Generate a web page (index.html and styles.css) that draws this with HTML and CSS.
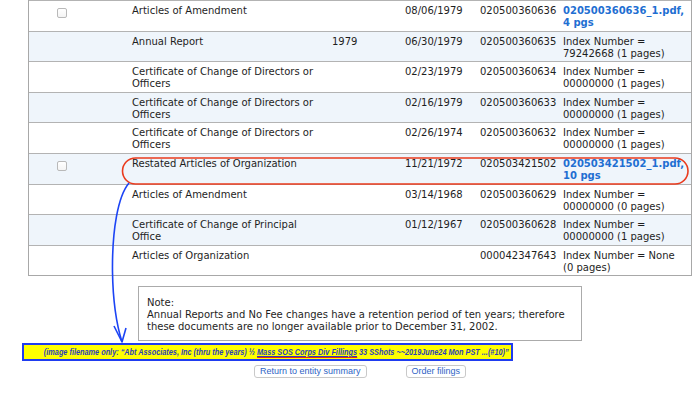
FILE: index.html
```html
<!DOCTYPE html>
<html>
<head>
<meta charset="utf-8">
<link rel="stylesheet" href="styles.css">
</head>
<body>
<div class="page">
  <table class="filings">
    <colgroup>
      <col class="c-check"><col class="c-desc"><col class="c-year"><col class="c-date"><col class="c-num"><col class="c-doc">
    </colgroup>
    <tbody>
      <tr><td><span class="box"></span></td><td>Articles of Amendment</td><td></td><td>08/06/1979</td><td>020500360636</td><td><a class="pdf" href="#">020500360636_1.pdf, 4 pgs</a></td></tr>
      <tr><td></td><td>Annual Report</td><td>1979</td><td>06/30/1979</td><td>020500360635</td><td>Index Number = 79242668 (1 pages)</td></tr>
      <tr><td></td><td>Certificate of Change of Directors or Officers</td><td></td><td>02/23/1979</td><td>020500360634</td><td>Index Number = 00000000 (1 pages)</td></tr>
      <tr><td></td><td>Certificate of Change of Directors or Officers</td><td></td><td>02/16/1979</td><td>020500360633</td><td>Index Number = 00000000 (1 pages)</td></tr>
      <tr><td></td><td>Certificate of Change of Directors or Officers</td><td></td><td>02/26/1974</td><td>020500360632</td><td>Index Number = 00000000 (1 pages)</td></tr>
      <tr><td><span class="box"></span></td><td>Restated Articles of Organization</td><td></td><td>11/21/1972</td><td>020503421502</td><td><a class="pdf" href="#">020503421502_1.pdf, 10 pgs</a></td></tr>
      <tr><td></td><td>Articles of Amendment</td><td></td><td>03/14/1968</td><td>020500360629</td><td>Index Number = 00000000 (0 pages)</td></tr>
      <tr><td></td><td>Certificate of Change of Principal Office</td><td></td><td>01/12/1967</td><td>020500360628</td><td>Index Number = 00000000 (1 pages)</td></tr>
      <tr><td></td><td>Articles of Organization</td><td></td><td></td><td>000042347643</td><td>Index Number = None (0 pages)</td></tr>
    </tbody>
  </table>

  <div class="note">
    Note:<br>
    Annual Reports and No Fee changes have a retention period of ten years; therefore these documents are no longer available prior to December 31, 2002.
  </div>

  <div class="caption"><span class="caption-text">(image filename only: “Abt Associates, Inc (thru the years) ½ <span class="mark">Mass SOS Corps Div Fillings</span> 33 SShots ~~2019June24 Mon PST ...(#10)”</span></div>

  <div class="actions">
    <button class="btn" type="button">Return to entity summary</button>
    <button class="btn" type="button">Order filings</button>
  </div>

  <svg class="annot" width="699" height="395" viewBox="0 0 699 395">
    <rect x="122.5" y="158" width="565.5" height="26" rx="13" ry="13" fill="none" stroke="#ea3b1e" stroke-width="1.6"/>
    <path d="M129,183 C118,196 112,230 112.5,272 C113,305 117,326 122,342" fill="none" stroke="#1c44f5" stroke-width="1.6"/>
    <path d="M114,326 L122,342 L126,328" fill="none" stroke="#1c44f5" stroke-width="1.6" stroke-linejoin="round"/>
  </svg>
</div>
</body>
</html>
```
FILE: styles.css
```css
html, body {
  margin: 0;
  padding: 0;
  background: #ffffff;
}
body {
  font-family: "DejaVu Sans", Verdana, sans-serif;
  font-size: 10px;
  line-height: 12px;
  color: #1e1e1e;
}
.page {
  position: relative;
  width: 699px;
  height: 395px;
  overflow: hidden;
}
.filings {
  margin-left: 28px;
  width: 664px;
  table-layout: fixed;
  border-collapse: separate;
  border-spacing: 0;
  border-left: 1px solid #a8a8a8;
  border-right: 1px solid #a8a8a8;
  border-bottom: 1px solid #a8a8a8;
}
.c-check { width: 100px; }
.c-desc { width: 200px; }
.c-year { width: 73px; }
.c-date { width: 75px; }
.c-num { width: 83px; }
.c-doc { width: 131px; }
.filings td {
  vertical-align: top;
  padding: 4px 3px 1.6px 3px;
  border-top: 1px solid #b3b3b3;
  line-height: 12px;
}
.filings tr:nth-child(even) td {
  background: #eff5fb;
}
.box {
  display: block;
  width: 8px;
  height: 8px;
  margin: 3px 0 0 25px;
  border: 1px solid #b9b9b9;
  border-radius: 2px;
  background: linear-gradient(#ffffff, #f4f4f4);
}
.pdf {
  color: #1f6fd2;
  font-weight: bold;
  text-decoration: none;
}
.note {
  width: 444px;
  box-sizing: border-box;
  margin: 10px auto 0 138px;
  padding: 10px 8px 7px 8px;
  border: 1px solid #ababab;
  line-height: 12px;
}
.caption {
  display: flex;
  justify-content: flex-end;
  align-items: center;
  margin: 2px 0 0 22px;
  width: 491px;
  height: 18px;
  box-sizing: border-box;
  border: 2px solid #1f3cf0;
  background: #ffff00;
  padding: 0 2px 0 0;
  font-family: "Liberation Sans", Arial, sans-serif;
  font-style: italic;
  font-weight: bold;
  font-size: 9.5px;
  line-height: 12px;
  color: #2d3fb8;
  white-space: nowrap;
}
.caption-text {
  display: inline-block;
  flex: none;
  transform: scaleX(0.77);
  transform-origin: right center;
}
.mark {
  text-decoration: underline;
  border-bottom: 1.5px solid #e5261a;
}
.actions {
  display: flex;
  justify-content: center;
  gap: 39px;
  margin: 4px 0 0 28px;
  width: 664px;
}
.btn {
  height: 13px;
  padding: 0 5px;
  border: 1px solid #c9c9c9;
  border-radius: 3px;
  background: #ffffff;
  color: #2e64c6;
  font-family: "Liberation Sans", Arial, sans-serif;
  font-size: 9px;
  line-height: 11px;
}
.annot {
  position: absolute;
  left: 0;
  top: 0;
  pointer-events: none;
}
```
